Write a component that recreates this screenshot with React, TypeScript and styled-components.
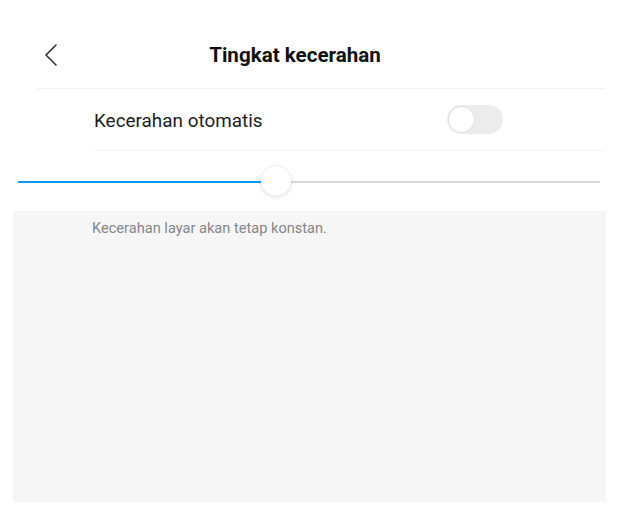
import React from "react";
import styled, { createGlobalStyle } from "styled-components";

const Global = createGlobalStyle`
  html, body { margin: 0; padding: 0; background: #ffffff; }
  body { font-family: Roboto, "Noto Sans", "Liberation Sans", sans-serif; width: 620px; height: 516px; overflow: hidden; }
`;

const Page = styled.div`
  width: 620px;
  height: 516px;
  display: flex;
  flex-direction: column;
`;

const Header = styled.div`
  position: relative;
  height: 66px;
  margin-top: 22px;
  display: flex;
  align-items: center;
  justify-content: center;
  padding-right: 30px;
`;

const BackButton = styled.div`
  position: absolute;
  left: 42px;
  top: 21px;
  width: 18px;
  height: 24px;
  display: flex;
  align-items: center;
  justify-content: center;
`;

const Title = styled.h1`
  margin: 0;
  font-size: 20.6px;
  font-weight: 700;
  color: #111;
`;

const Divider = styled.div<{ $left: number; $right: number }>`
  height: 1px;
  background: #f1f1f1;
  margin-left: ${(p) => p.$left}px;
  margin-right: ${(p) => p.$right}px;
`;

const Row = styled.div`
  margin-left: 94px;
  margin-right: 15px;
  padding-right: 102px;
  display: flex;
  align-items: center;
  justify-content: space-between;
  border-bottom: 1px solid #f1f1f1;
  box-sizing: border-box;
  height: 62px;
`;

const RowLabel = styled.span`
  font-size: 18.9px;
  color: #1d1d1d;
  padding-top: 1px;
`;

const Toggle = styled.div<{ $on: boolean }>`
  width: 56px;
  height: 29px;
  border-radius: 15px;
  background: ${(p) => (p.$on ? "#1a9cf2" : "#ececec")};
  box-sizing: border-box;
  padding: 2px;
  display: flex;
  justify-content: ${(p) => (p.$on ? "flex-end" : "flex-start")};
`;

const Knob = styled.div`
  width: 25px;
  height: 25px;
  border-radius: 50%;
  background: #fff;
  box-shadow: 0 0 0 1px #e2e2e2;
`;

const SliderArea = styled.div`
  height: 60px;
  padding: 0 20px 0 18px;
  display: flex;
  align-items: center;
`;

const Track = styled.div`
  position: relative;
  flex: 1;
  height: 2px;
  background: #d9d9d9;
  margin-top: 1px;
`;

const Fill = styled.div`
  position: absolute;
  left: 0;
  top: 0;
  height: 2px;
  background: #0c9af3;
`;

const Thumb = styled.div`
  position: absolute;
  top: -15px;
  width: 30px;
  height: 30px;
  margin-left: -15px;
  border-radius: 50%;
  background: #fff;
  box-shadow: 0 1px 4px rgba(0, 0, 0, 0.14), 0 0 1px rgba(0, 0, 0, 0.12);
`;

const Panel = styled.div`
  margin: 0 14px 14px 13px;
  flex: 1;
  background: #f6f6f6;
  padding: 8px 0 0 79px;
`;

const Hint = styled.p`
  margin: 0;
  font-size: 14.6px;
  color: #868686;
`;

export default function App() {
  const value = 258;
  return (
    <Page>
      <Global />
      <Header>
        <BackButton>
          <svg width="14" height="22" viewBox="0 0 14 22" fill="none">
            <path d="M12 1 L2 11 L12 21" stroke="#333" strokeWidth="1.6" strokeLinecap="round" strokeLinejoin="round" />
          </svg>
        </BackButton>
        <Title>Tingkat kecerahan</Title>
      </Header>
      <Divider $left={37} $right={15} />
      <Row>
        <RowLabel>Kecerahan otomatis</RowLabel>
        <Toggle $on={false}>
          <Knob />
        </Toggle>
      </Row>
      <SliderArea>
        <Track>
          <Fill style={{ width: `${value - 14}px` }} />
          <Thumb style={{ left: `${value}px` }} />
        </Track>
      </SliderArea>
      <Panel>
        <Hint>Kecerahan layar akan tetap konstan.</Hint>
      </Panel>
    </Page>
  );
}
